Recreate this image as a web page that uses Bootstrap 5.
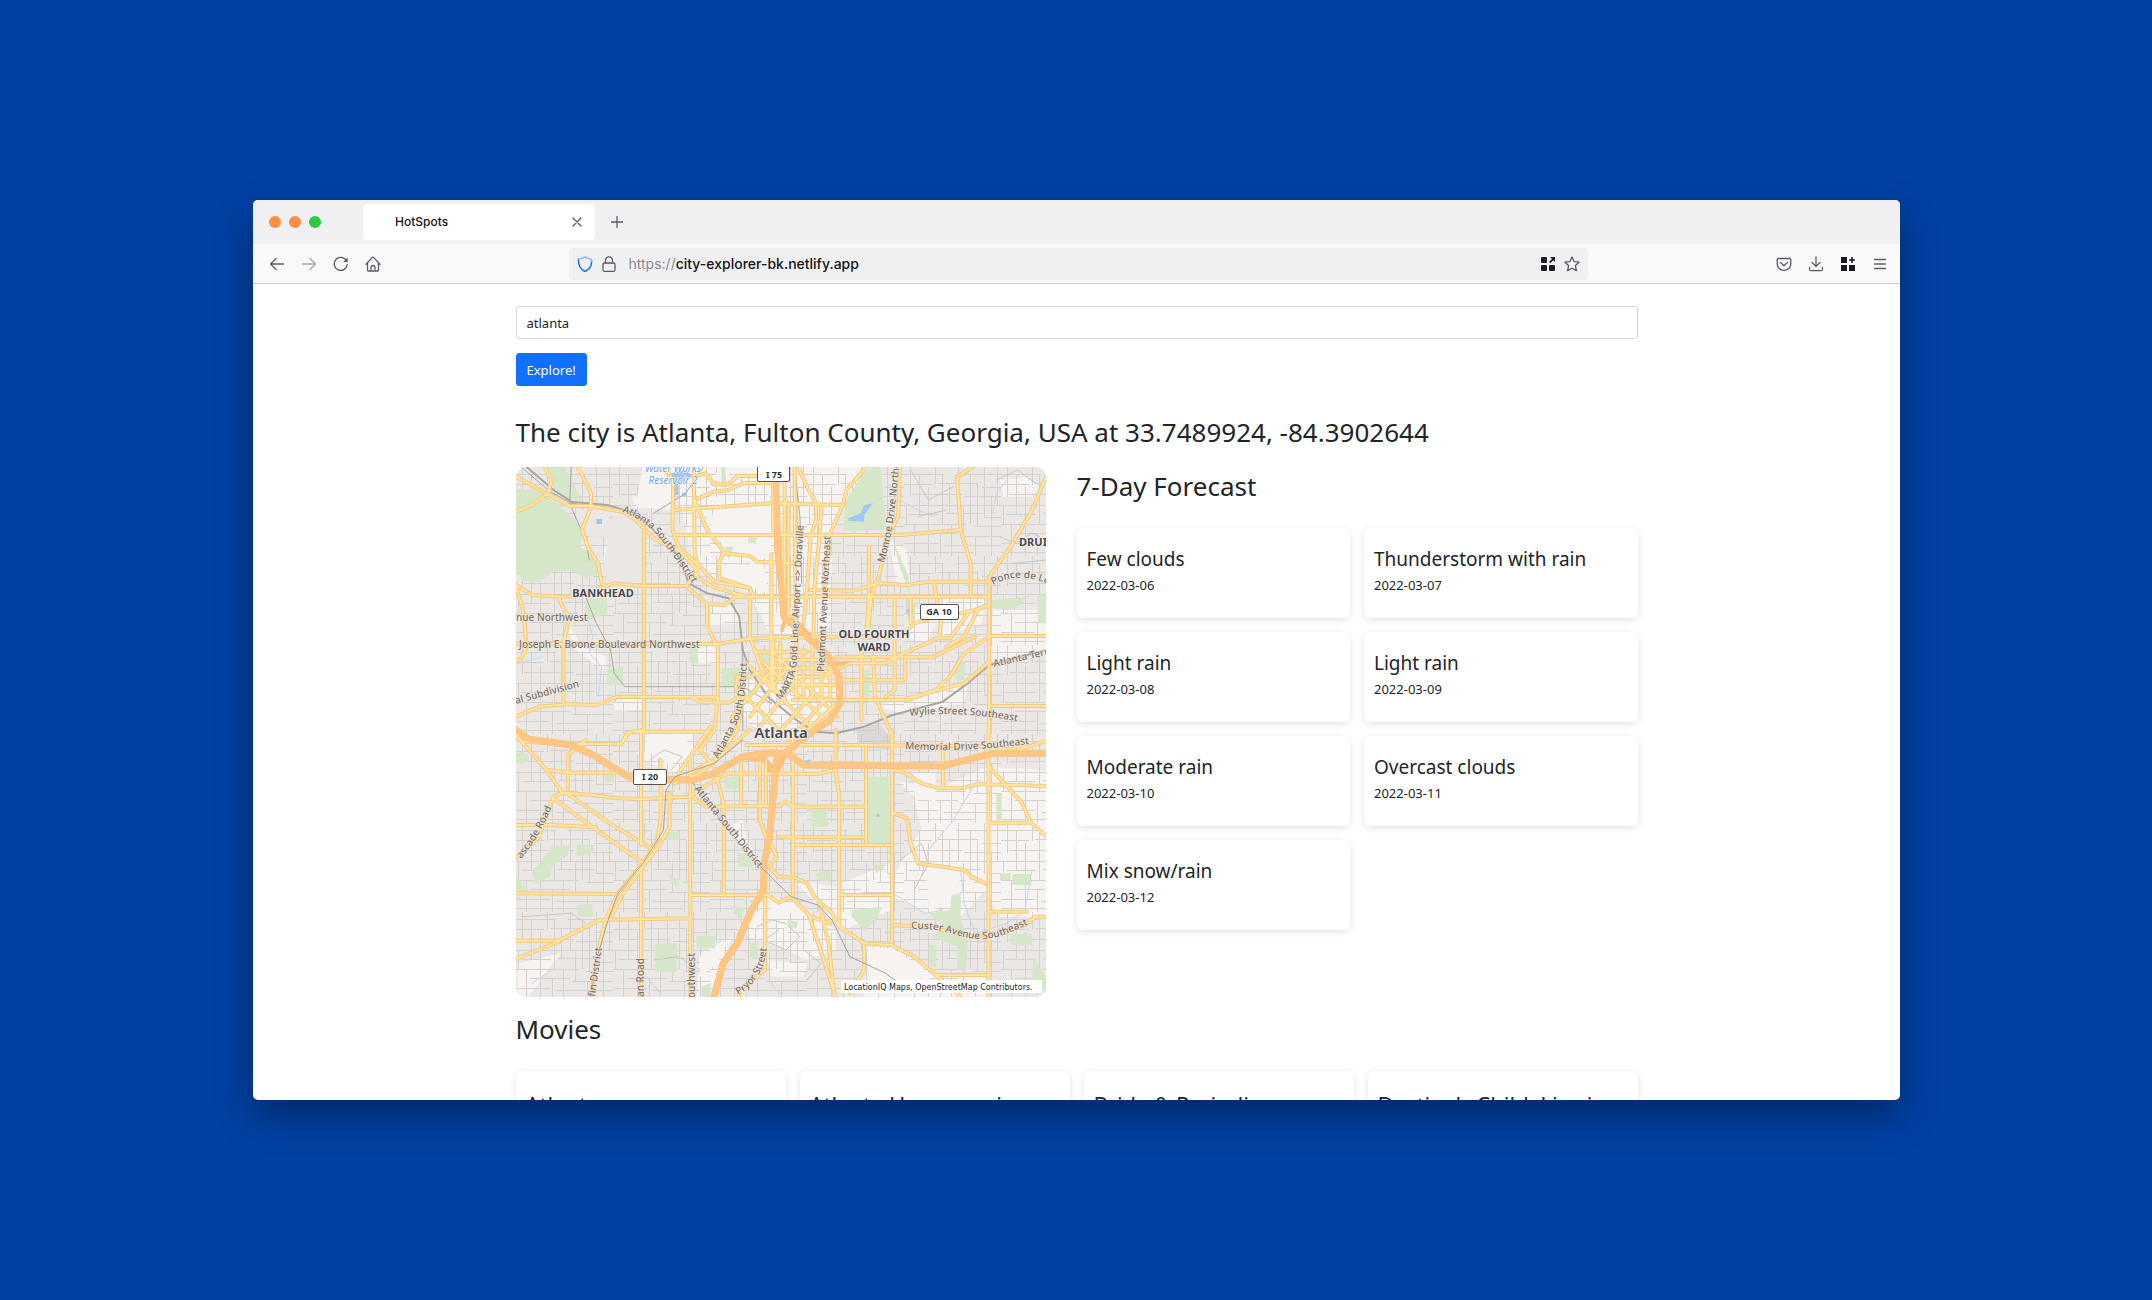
<!DOCTYPE html>
<html lang="en">
<head>
<meta charset="utf-8">
<meta name="viewport" content="width=device-width, initial-scale=1">
<title>HotSpots</title>
<link href="https://cdn.jsdelivr.net/npm/bootstrap@5.3.0/dist/css/bootstrap.min.css" rel="stylesheet">
<style>
  body { background: #0041a3; font-family: "Noto Sans", "Open Sans", sans-serif; font-size: 13px; color: #212529; }
  .desktop { height: 100vh; padding: 200px 252px 200px 253px; }
  .browser { border-radius: 5px; background: #fff; box-shadow: 0 16px 36px rgba(0,0,0,.36); }
  .chrome-ui { font-family: Inter, sans-serif; color: #15141a; }
  .tab-strip { height: 44px; background: #f0f0f3; padding-left: 16px; }
  .light { width: 12px; height: 12px; border-radius: 50%; background: #ff8f45; }
  .light-go { background: #2dca42; }
  .page-tab { width: 232px; height: 36px; margin-left: 42px; border-radius: 4px; background: #fff; padding: 0 12px 0 32px; font-size: 12px; font-weight: 500; }
  .tool-bar { height: 40px; background: #f9f9fa; border-bottom: 1px solid #ccccce; padding: 0 12px 0 16px; }
  .icon-btn { display: flex; padding: 0; border: 0; background: none; color: #5b5b66; }
  .icon-btn svg, .url-bar svg { display: block; fill: none; stroke: currentColor; stroke-width: 1.3; stroke-linecap: round; stroke-linejoin: round; }
  .url-bar { width: 63%; height: 32px; border-radius: 4px; background: #f0f0f3; padding: 0 8px; font-size: 14px; color: #5b5b66; }
  .url-bar .solid, .icon-btn .solid { fill: #1c1b22; stroke: none; }
  .address { color: #8a8a90; text-decoration: none; margin-left: 4px; }
  .address span { color: #15141a; font-weight: 500; }
  .page-body { max-width: 1122px; padding-top: 22px; }
  .page-body .form-control, .page-body .btn { height: 33px; padding: 1px 10px 0; border-radius: 3px; font-size: 13px; line-height: 31px; }
  .page-body .form-control { color: #212529; border-color: #d5dae0; }
  .page-body .btn { margin-top: 14px; background: #1270ff; border-color: #1270ff; }
  .heading { font-size: 26px; font-weight: 400; line-height: 38px; margin: 0; }
  .city-heading { margin: 27px 0 16px; }
  .list-heading { margin-bottom: 23px; }
  .movies-heading { margin-top: 13px; }
  .city-split { display: grid; grid-template-columns: 1fr 1fr; }
  .city-map { padding-right: 31px; }
  .city-map svg { display: block; width: 100%; height: auto; border-radius: 10px; }
  .tiles { display: grid; grid-template-columns: repeat(2, 1fr); gap: 14px; }
  .tiles-4 { grid-template-columns: repeat(4, 1fr); }
  .tile { border: 0; border-radius: 6px; padding: 19px 10px 22px; box-shadow: 0 2px 7px rgba(60,40,20,.13); }
  .tile h3 { font-size: 19px; font-weight: 400; line-height: 25px; margin: 0 0 3px; }
  .tiles-4 .tile h3 { font-size: 22px; line-height: 28px; }
  .tile p { font-size: 13px; line-height: 21px; margin: 0; }
  /* map */
  .city-map path, .city-map polygon { vector-effect: non-scaling-stroke; }
  .lines { fill: none; stroke-linejoin: round; stroke-linecap: round; }
  .place { font-weight: 700; fill: #4a4951; stroke: #f4f0ed; stroke-width: 2px; paint-order: stroke; text-anchor: middle; }
  .street { font-size: 10px; font-weight: 500; fill: #7d7268; stroke: #f1ece6; stroke-width: 1px; paint-order: stroke; }
</style>
<script src="https://cdn.jsdelivr.net/npm/bootstrap@5.3.0/dist/js/bootstrap.bundle.min.js"></script>
</head>
<body>
<div class="desktop">
<div class="browser h-100 overflow-hidden d-flex flex-column">
  <header class="chrome-ui flex-shrink-0">
    <div class="tab-strip d-flex align-items-center">
      <div class="d-flex gap-2"><span class="light"></span><span class="light"></span><span class="light light-go"></span></div>
      <div class="page-tab d-flex align-items-center justify-content-between">
        <span>HotSpots</span>
        <button class="icon-btn" aria-label="Close tab"><svg width="12" height="12" viewBox="0 0 12 12"><path d="M2 2l8 8M10 2l-8 8"/></svg></button>
      </div>
      <button class="icon-btn ms-3" aria-label="New tab"><svg width="12" height="12" viewBox="0 0 12 12"><path d="M6 .5v11M.5 6h11"/></svg></button>
    </div>
    <div class="tool-bar d-flex align-items-center">
      <div class="d-flex gap-3">
        <button class="icon-btn" aria-label="Back"><svg width="16" height="16" viewBox="0 0 16 16"><path d="M1.5 8h13M7 2.5L1.500 8 7 13.500"/></svg></button>
        <button class="icon-btn opacity-50" aria-label="Forward"><svg width="16" height="16" viewBox="0 0 16 16"><path d="M14.500 8h-13M9 2.500L14.500 8 9 13.500"/></svg></button>
        <button class="icon-btn" aria-label="Reload"><svg width="16" height="16" viewBox="0 0 16 16"><path d="M14.200 8.500a6.500 6.500 0 1 1-2-5.300l1.500 1.500"/><path d="M14.700 1.500v4.500h-4.500z" fill="currentColor" stroke="none"/></svg></button>
        <button class="icon-btn" aria-label="Home"><svg width="16" height="16" viewBox="0 0 16 16"><path d="M1 8.300L7.200 1.600q.8-.8 1.600 0L15 8.300M2.500 7v7q0 1 1 1h9q1 0 1-1V7M6 15v-4q0-1.500 2-1.500t2 1.500v4"/></svg></button>
      </div>
      <div class="url-bar mx-auto d-flex align-items-center gap-2">
        <svg width="16" height="16" viewBox="0 0 16 16"><path stroke="#1270ff" stroke-width="1.500" d="M1.500 3C1 9.500 4 13.500 8 15.500c4-2 7-6 6.500-11"/><path stroke="#8fc0f5" stroke-width="1.500" d="M1.500 3.200Q5 3 8 .8q3 2.200 6.500 2.400v2"/></svg>
        <svg width="16" height="16" viewBox="0 0 16 16"><rect x="2" y="7" width="12" height="8.300" rx="1.500"/><path d="M4.500 7V4.300a3.500 3.500 0 0 1 7 0V7"/></svg>
        <a class="address me-auto" href="#">https://<span>city-explorer-bk.netlify.app</span></a>
        <svg width="16" height="16" viewBox="0 0 16 16"><g class="solid"><rect x="1" y="1" width="6" height="6" rx="1"/><rect x="1" y="9" width="6" height="6" rx="1"/><rect x="9" y="9" width="6" height="6" rx="1"/><path d="M10 1h5v5l-1.700-1.700L10.300 7.300 9 6l3-3z"/></g></svg>
        <svg width="16" height="16" viewBox="0 0 16 16"><path d="M8 1l2.100 4.600 5 .6-3.700 3.400 1 5L8 12.200l-4.400 2.400 1-5L.9 6.200l5-.6z"/></svg>
      </div>
      <div class="d-flex gap-3">
        <button class="icon-btn" aria-label="Save to Pocket"><svg width="16" height="16" viewBox="0 0 16 16"><path d="M2.500 2.500h11q1.300 0 1.300 1.300V8a6.800 6.300 0 0 1-13.600 0V3.800q0-1.300 1.300-1.300zM4.500 6.500L8 9.800l3.500-3.300"/></svg></button>
        <button class="icon-btn" aria-label="Downloads"><svg width="16" height="16" viewBox="0 0 16 16"><path d="M8 .8v9.400M4 6.500l4 4 4-4M1.500 11.500v1.700q0 1.500 1.500 1.500h10q1.500 0 1.500-1.500v-1.700"/></svg></button>
        <button class="icon-btn" aria-label="Extensions"><svg width="16" height="16" viewBox="0 0 16 16"><path class="solid" d="M1 1h6v6H1zM1 9h6v6H1zM9 9h6v6H9zM11.200 1h1.600v2.200H15v1.600h-2.200V7h-1.600V4.800H9V3.200h2.200z"/></svg></button>
        <button class="icon-btn" aria-label="Menu"><svg width="16" height="16" viewBox="0 0 16 16"><path d="M2.500 3.500h11M2.500 8h11M2.500 12.500h11"/></svg></button>
      </div>
    </div>
  </header>

  <main class="flex-grow-1 overflow-hidden">
  <div class="page-body mx-auto">
    <form>
      <input class="form-control" type="text" value="atlanta" aria-label="City">
      <button class="btn btn-primary" type="button">Explore!</button>
    </form>
    <h1 class="heading city-heading">The city is Atlanta, Fulton County, Georgia, USA at 33.7489924, -84.3902644</h1>

    <div class="city-split">
      <div class="city-map">
      <svg viewBox="0 0 530 530" role="img" aria-label="Map of Atlanta">
        <defs>
          <pattern id="blocks" width="97" height="89" patternUnits="userSpaceOnUse">
            <path fill="none" stroke="#d5d1cf" d="M0 7.500h40M52 7.500h45M0 17.500h28M34 16.500h40M78 20.500h19M8 27.500h50M60 29.500h37M0 38.500h97M5 47.500h30M42 46.500h36M80 50.500h17M0 57.500h62M70 59.500h27M14 66.500h40M56 69.500h41M0 76.500h34M40 78.500h57M0 85.500h70M6.500 0v30M15.500 7v40M24.500 20v69M31.500 0v18M38.500 7v50M45.500 17v30M47.500 57v32M54.500 0v38M59.500 40v30M66.500 7v50M73.500 16v43M71.500 69v20M80.500 0v50M87.500 29v60M93.500 0v38M10.500 57v32M36.500 66v23M2.500 38v20"/>
          </pattern>
          <g id="roads-north">
            <path d="M45 80L130 130 195 168 255 168 345 185 380 210 430 265 500 300 545 350 555 385 600 412 690 440M125 51L145 90 135 130 90 165 45 185M218 51L255 130V170L230 240 250 300 275 340 285 400 300 410M45 405L90 435 165 440 225 438 285 412 320 400 400 408H520L545 380 555 345 545 310 543 51M165 440L175 470 195 500 178 580V760M403 230V840M45 408L65 480 75 590 60 625 45 635M45 582H610L690 568 760 562H1120L1160 520 1225 500M610 582V750L600 840 560 900M45 800L110 770 190 762 270 765 330 740 610 742M540 742L560 757 640 758 670 740M520 408L580 462V530L610 590M580 462L630 465 660 440H1370M485 180L620 170 760 160 960 165M460 51L485 90 483 240 500 290 560 350 600 395 700 415 712 440M490 255H1080L1120 255 1290 240"/>
            <path d="M545 150L580 240 630 310 700 318 720 335 825 340M625 312L612 340 615 385 660 400 700 415M545 80L575 70 600 103 640 103 665 78 720 78M555 145L600 125 640 120 680 100 760 98M797 51V490M808 160V510M825 51L828 520M765 51V240M835 51L860 110 885 160V210L870 260 860 420 850 520M900 165L895 260 880 420 878 560M960 165L925 250 910 420M1025 51L970 120 960 165M1120 51L1115 200 1090 250 1060 380 1040 440 1030 560M1033 290V440L1025 560M870 420L990 422 1060 400 1140 405 1200 395H1375M1290 240L1280 80 1325 51M1290 240L1318 340V440M1529 80L1490 180 1430 290 1370 380V840M1215 395L1222 440 1235 510 1230 565M1370 465L1330 480 1290 490M1315 485L1260 565 1225 565 1120 615 1080 640 980 640 900 680 840 680M1340 475L1300 560 1250 590"/>
            <path d="M1370 560L1300 610 1260 680 1220 720 1140 750H820M1370 558H1529M715 605H860M940 622H1210L1330 560M1370 635L1300 700 1140 745M1105 440V720L1080 740M1135 620V690H940M1045 620L1050 740 1100 860M1012 590V810M1370 768H1529M700 440V560L740 680 800 750M760 315V700M350 870L360 845H590M660 680L700 680 750 655 940 655M765 560V700M785 580V680M830 560V740M850 600V740M875 560V740M900 600V745M925 620V745M760 630H935M830 705H940M800 655H935M665 680L660 715 680 740 665 840M1150 440V520"/>
            <path d="M690 640L870 830M720 620L920 820M760 600L945 800M670 720L780 840M800 660L700 800M830 690L720 840M870 740L770 860M915 745L810 870M945 760L840 860M770 650L650 800"/>
          </g>
          <g id="roads-south">
            <path d="M45 15L130 120 175 188 150 200 135 240 110 320 45 385M65 35L190 42 340 42 355 10 400 0M130 120L200 128H330M190 180V75L240 30M175 188L260 195 330 205 400 207 530 200 580 165 640 130 890 132 940 120M185 188L300 275 430 360M150 205L270 300 400 398M45 285H140L270 292M450 90V270L440 330 400 400 330 490 295 570 270 690 255 800M475 190V290L450 340 345 490 310 565M45 490L320 492M45 632H165L280 570 535 565M45 687L165 635M395 0V345M395 420V800M533 90V800M627 230V490M533 495H735M540 200L575 230 750 228M675 85V225M728 90V270L755 350M745 90V230M820 0V230"/>
            <path d="M820 230V500M940 0V120L950 200V590M780 322H1022M820 345H1095M780 230L800 215 820 230H1020M1025 50V345M1098 0V645M1098 120L1130 125 1180 160 1230 175 1290 175 1340 162 1529 168M1240 50V175M1370 110L1420 170 1460 215 1485 275 1529 320M1368 0V800M1370 278H1485M1098 248L1140 265 1150 340 1170 400 1300 420 1320 440 1360 460M820 440L860 460 880 500 930 550 950 590 1020 640 1095 645 1160 680 1220 735 1290 800M755 330L775 380 755 410 780 440 820 443M742 490L780 518 815 500 870 560 925 580M865 555L910 700 940 800M895 520L920 640 935 780M742 490V720L670 780V800M1020 645V720L980 790M950 495H1095M1220 735H1360M1098 585L1200 590 1320 620 1400 610 1470 585 1500 560 1529 560M1370 545H1475M690 45H1000L1480 50 1529 33M590 -10L500 130M700 0L560 130 490 160M560 60L600 110 627 225M665 0L600 90 530 130"/>
          </g>
        </defs>
        <rect width="530" height="530" fill="#ebe7e4"/>
        <g transform="scale(.35714 .33333) translate(-45 -51)">
          <g fill="#f7f3f1">
            <path d="M450 51H1025L960 170 930 260 930 520 870 560H760L700 430 620 400 540 330 500 130 380 180 370 140 450 120ZM1400 90L1470 80 1510 110 1490 140H1410ZM1380 480H1529V600L1370 640ZM590 470L660 465 680 520 590 525ZM1240 440L1360 440 1350 520 1240 560ZM320 740H400V780H320ZM690 690L960 690 920 830 720 840 650 760ZM1160 470L1230 510 1190 580 1130 560ZM205 285H235V315H205ZM540 590H605V640H540ZM1050 770L1310 700 1300 760 1130 790ZM1090 270L1140 300 1150 400 1110 400ZM180 500L230 590 300 620 290 660 210 600ZM290 290H325V330H290Z"/>
            <path transform="translate(0 840)" d="M405 10H540V110L480 130 405 90ZM1110 150L1220 180 1360 110 1529 120V560L1400 560 1360 480 1290 560 1200 550 1100 500 1100 440 1180 300 1160 200ZM1025 650L1100 650 1230 735 1360 740 1360 800H1020ZM690 540L760 500 830 520 940 600 940 660 860 690 760 640 690 620ZM560 670L650 620 600 800H550ZM820 450L940 470 1000 440 1090 400 1095 540 960 600ZM50 700L170 670 120 740 80 800H50ZM640 290L680 270 690 330 720 380 700 400ZM750 690L860 700 850 740H760Z"/>
          </g>
        </g>
        <rect width="530" height="530" fill="url(#blocks)"/>
        <g transform="scale(.35714 .33333) translate(-45 -51)">
          <g fill="#f7f3f1">
            <path d="M630 180L760 165V330L630 300 580 200ZM620 345L740 345 750 430 620 380ZM610 51H720L700 75 650 70 600 95ZM400 51H450L480 100 480 180 380 170ZM1130 280L1150 400H1110ZM880 770L920 755 930 790 890 815Z"/>
            <path transform="translate(0 840)" d="M410 15H525V100L470 100 410 60ZM1195 400L1290 420 1280 520 1200 540ZM1030 655L1100 655 1210 735 1200 750H1030ZM560 680L640 630 610 700 560 740ZM750 500L860 540 870 560 760 540ZM1160 130H1220V215L1160 200Z"/>
          </g>
          <path fill="#ebe7e4" d="M325 180L400 200 400 400 300 400 290 330ZM210 180H300L320 260H250Z"/>
          <g fill="#d6e6c9">
            <path d="M45 118L110 120 150 150 190 190 235 240 225 290 265 320 280 370 240 385 200 360 150 365 110 395 65 395 45 360ZM120 51H180L230 150 180 145 150 110ZM1040 51H1065L1080 200V240L960 243 970 150 1010 80ZM240 440L300 430 300 490 235 515ZM620 655H680V710H620ZM718 612L758 602 755 670 735 650ZM300 660L345 650V705H300ZM1378 450L1480 440 1440 480 1378 475ZM1505 435H1529V520H1507ZM1100 270L1145 380 1150 440 1120 350ZM1140 450L1165 460 1160 510 1140 500ZM695 262H722L715 280 695 280ZM630 290H655L640 330ZM530 590H555V640H530ZM1280 625L1305 640 1300 690 1275 690ZM1010 660H1035V740H1015ZM1020 520H1045V570H1020ZM620 51H632V110H620Z"/>
            <path transform="translate(0 840)" d="M1028 140H1090L1093 345H1026ZM873 232H918V290H873ZM630 140H670V175L630 180ZM665 370L710 365V410H670ZM435 640H495V725H435ZM145 350L195 345 190 375 145 410 140 440 100 460 90 430ZM215 345H262V370L215 378ZM215 525L260 522V560H220ZM550 618H602V655H550ZM985 540L1070 530 1055 570 1020 600 985 560ZM1265 495L1290 490V560L1310 640 1305 720H1280V650L1210 620 1250 590 1200 550 1260 540ZM1390 190H1405V270H1390ZM1435 432H1488V465H1435ZM1430 612H1490V645H1430ZM1492 680L1529 740V790L1492 750ZM565 770L590 760V800H565ZM885 430L925 420V455L890 450ZM470 430L500 450V470L480 460ZM45 70H80V95L45 100ZM465 305H500V330H465ZM645 530L685 535 670 570ZM1200 645H1220V710H1203ZM805 570L835 575 830 595 810 595ZM1040 405L1082 405 1055 430ZM1400 430H1430V450H1400ZM293 130H320V155H293ZM700 640H722V680H700ZM45 440L90 490H45Z"/>
          </g>
          <path fill="#c6c2bf" opacity=".4" d="M1000 840L1060 820 1100 870 1090 900 1000 890Z"/>
          <path fill="#a1c8f5" d="M478 70L520 60 540 80 500 95 500 135H485V100ZM975 205L1010 190 1020 165 1045 160 1020 195 1020 215 975 212ZM270 207H286V222H270ZM1138 480L1148 475 1145 500ZM510 128H522V138H510ZM850 933L870 928V940H850ZM1050 1098L1062 1090V1102Z"/>
          <g class="lines" stroke="#bfdaf2" stroke-width="1">
            <path d="M245 500L260 560 250 610 285 650 275 740M1420 90L1390 130 1380 190M50 640L120 620M1085 100L1120 150 1170 180 1215 200M1325 1010L1270 1110 1200 1200 1180 1280M1100 1330L1190 1390 1240 1380M1290 1260L1300 1360 1330 1450 1420 1420 1470 1380 1490 1260M410 1580L450 1630M60 1330L45 1350M750 1590L790 1640M680 1430L700 1480M90 1600L145 1560"/>
          </g>
          <g class="lines" stroke="#c9c6c4">
            <path d="M1390 90L1450 60 1500 100M1400 260L1440 280 1490 250 1529 270M1440 340L1529 330M1150 60L1200 150 1270 110M1170 200L1250 180M60 1400L200 1390 240 1420M720 1430L760 1410 800 1420 840 1460 800 1500 740 1470 780 1440M850 1500L900 1540 860 1590M430 1530L500 1520 560 1560M1120 1230L1180 1180 1200 1240 1160 1320M420 930L460 900 510 920 480 960"/>
          </g>
          <g class="lines" stroke="#a9a6a5" stroke-width="1">
            <path stroke-width="2" d="M75 51L150 120 200 155 300 165 380 190 430 240 500 320 530 400 580 430 640 445 670 500 680 600 700 660 750 740 830 810 880 845 940 850 1020 830 1100 795 1240 755 1310 700 1370 645 1529 600"/>
            <path d="M60 51L140 125 200 160 300 172M200 51L195 160 240 270 250 330M240 440L270 520 310 600 320 670 350 710H680L760 760M825 51L840 200 845 400M680 600V840M430 190L520 130 570 51"/>
          </g>
          <use href="#roads-north" class="lines" stroke="#f6c77f" stroke-width="4"/>
          <use href="#roads-south" y="840" class="lines" stroke="#f6c77f" stroke-width="4"/>
          <g class="lines" stroke="#fbbf78" stroke-width="7">
            <path d="M772 95L778 300 788 400 795 500 860 560 920 620 950 680 952 760 920 815 880 840 820 890 775 930 765 1040 755 1160 740 1240 738 1320 700 1390 665 1480 625 1540 598 1645M45 840L80 868 200 885 260 915 360 980 460 988 540 990 600 970 680 920 760 908 810 915 850 945 1240 948 1380 910 1529 910"/>
            <path stroke-width="4" d="M790 540L800 500 830 515 900 590M920 640L980 640M680 925L740 930 770 990M830 890L850 860M760 950L740 925M800 910L780 960"/>
          </g>
          <use href="#roads-north" class="lines" stroke="#ffe7a1" stroke-width="2"/>
          <use href="#roads-south" y="840" class="lines" stroke="#ffe7a1" stroke-width="2"/>
          <path class="lines" stroke="#fdc684" stroke-width="6" d="M772 95L778 300 788 400 795 500 860 560 920 620 950 680 952 760 920 815 880 840 820 890 775 930 765 1040 755 1160 740 1240 738 1320 700 1390 665 1480 625 1540 598 1645M45 840L80 868 200 885 260 915 360 980 460 988 540 990 600 970 680 920 760 908 810 915 850 945 1240 948 1380 910 1529 910"/>
          <path class="lines" stroke="#a5a2a0" stroke-width="1" d="M680 870L600 940 490 980 465 1020 458 1140 400 1240 330 1330 300 1420 270 1530 255 1640M540 1000L640 1140 730 1250 815 1340 890 1365 930 1410 980 1520 1080 1570 1130 1610"/>
        </g>
        <defs>
          <path id="l-sub" d="M0 237L66 219"/><path id="l-asd1" d="M106 45Q130 53 146 74T176 116"/><path id="l-asd2" d="M202 292Q214 272 222 254T231 190"/>
          <path id="l-asd3" d="M178 322L212 364 246 406"/><path id="l-marta" d="M264 233Q280 218 281 190L288 50"/><path id="l-pied" d="M308 205L315 60"/>
          <path id="l-monroe" d="M368 96Q380 60 385 -30"/><path id="l-ponce" d="M477 118Q502 104 532 117"/><path id="l-terr" d="M478 200L540 186"/>
          <path id="l-wylie" d="M394 249Q445 243 510 256"/><path id="l-mem" d="M389 282Q450 286 520 276"/><path id="l-cust" d="M395 462C430 460 445 473 466 472S495 464 516 456"/>
          <path id="l-pryor" d="M222 528Q250 512 251 475"/><path id="l-casc" d="M5 392Q24 370 38 335"/>
        </defs>
        <g class="street">
          <text x="0" y="154">nue Northwest</text><text x="3" y="181">Joseph E. Boone Boulevard Northwest</text>
          <text><textPath href="#l-sub">al Subdivision</textPath></text><text><textPath href="#l-asd1">Atlanta South District</textPath></text>
          <text><textPath href="#l-asd2">Atlanta South District</textPath></text><text><textPath href="#l-asd3">Atlanta South District</textPath></text>
          <text><textPath href="#l-marta">MARTA Gold Line: Airport =&gt; Doraville</textPath></text><text><textPath href="#l-pied">Piedmont Avenue Northeast</textPath></text>
          <text><textPath href="#l-monroe">Monroe Drive Northe</textPath></text><text><textPath href="#l-ponce">Ponce de Le</textPath></text>
          <text><textPath href="#l-terr">Atlanta Terr</textPath></text><text><textPath href="#l-wylie">Wylie Street Southeast</textPath></text>
          <text><textPath href="#l-mem">Memorial Drive Southeast</textPath></text><text><textPath href="#l-cust">Custer Avenue Southeast</textPath></text>
          <text><textPath href="#l-pryor">Pryor Street</textPath></text><text><textPath href="#l-casc">ascade Road</textPath></text>
          <text transform="translate(79 530) rotate(-82)">fin District</text><text transform="translate(128 530) rotate(-90)">an Road</text><text transform="translate(179 531) rotate(-90)">outhwest</text>
        </g>
        <g font-size="10" font-style="italic" fill="#6fa3da" stroke="#fff" stroke-width="1" paint-order="stroke" text-anchor="middle"><text x="157" y="5">Water Works</text><text x="157" y="17">Reservoir 2</text></g>
        <g class="place" font-size="11"><text x="87" y="130">BANKHEAD</text><text x="358" y="171">OLD FOURTH</text><text x="358" y="184">WARD</text><text x="517" y="79">DRUI</text><text x="265" y="271" font-size="15" font-weight="600">Atlanta</text></g>
        <g fill="#fff" stroke="#55534f" stroke-width="1"><rect x="241.500" y="-3.500" width="32" height="18" rx="1.500"/><rect x="404.500" y="137.500" width="38" height="15" rx="1.500"/><rect x="117.500" y="302.500" width="33" height="15" rx="1.500"/></g>
        <g font-size="9" font-weight="700" fill="#333" text-anchor="middle"><text x="258" y="11">I 75</text><text x="423" y="148">GA 10</text><text x="134" y="313">I 20</text></g>
        <rect x="325" y="513" width="201" height="13" fill="#fff"/>
        <text x="328" y="523" font-family="DejaVu Sans" font-size="8" fill="#222">LocationIQ Maps, OpenStreetMap Contributors.</text>
      </svg>
      </div>
      <section>
        <h2 class="heading list-heading">7-Day Forecast</h2>
        <div class="tiles">
          <article class="card tile"><h3>Few clouds</h3><p>2022-03-06</p></article>
          <article class="card tile"><h3>Thunderstorm with rain</h3><p>2022-03-07</p></article>
          <article class="card tile"><h3>Light rain</h3><p>2022-03-08</p></article>
          <article class="card tile"><h3>Light rain</h3><p>2022-03-09</p></article>
          <article class="card tile"><h3>Moderate rain</h3><p>2022-03-10</p></article>
          <article class="card tile"><h3>Overcast clouds</h3><p>2022-03-11</p></article>
          <article class="card tile"><h3>Mix snow/rain</h3><p>2022-03-12</p></article>
        </div>
      </section>
    </div>

    <h2 class="heading list-heading movies-heading">Movies</h2>
    <div class="tiles tiles-4">
      <article class="card tile"><h3>Atlanta</h3></article>
      <article class="card tile"><h3>Atlanta Homecoming</h3></article>
      <article class="card tile"><h3>Bride &amp; Prejudice</h3></article>
      <article class="card tile"><h3>Destiny's Child: Live in</h3></article>
    </div>
  </div>
  </main>
</div>
</div>
</body>
</html>
